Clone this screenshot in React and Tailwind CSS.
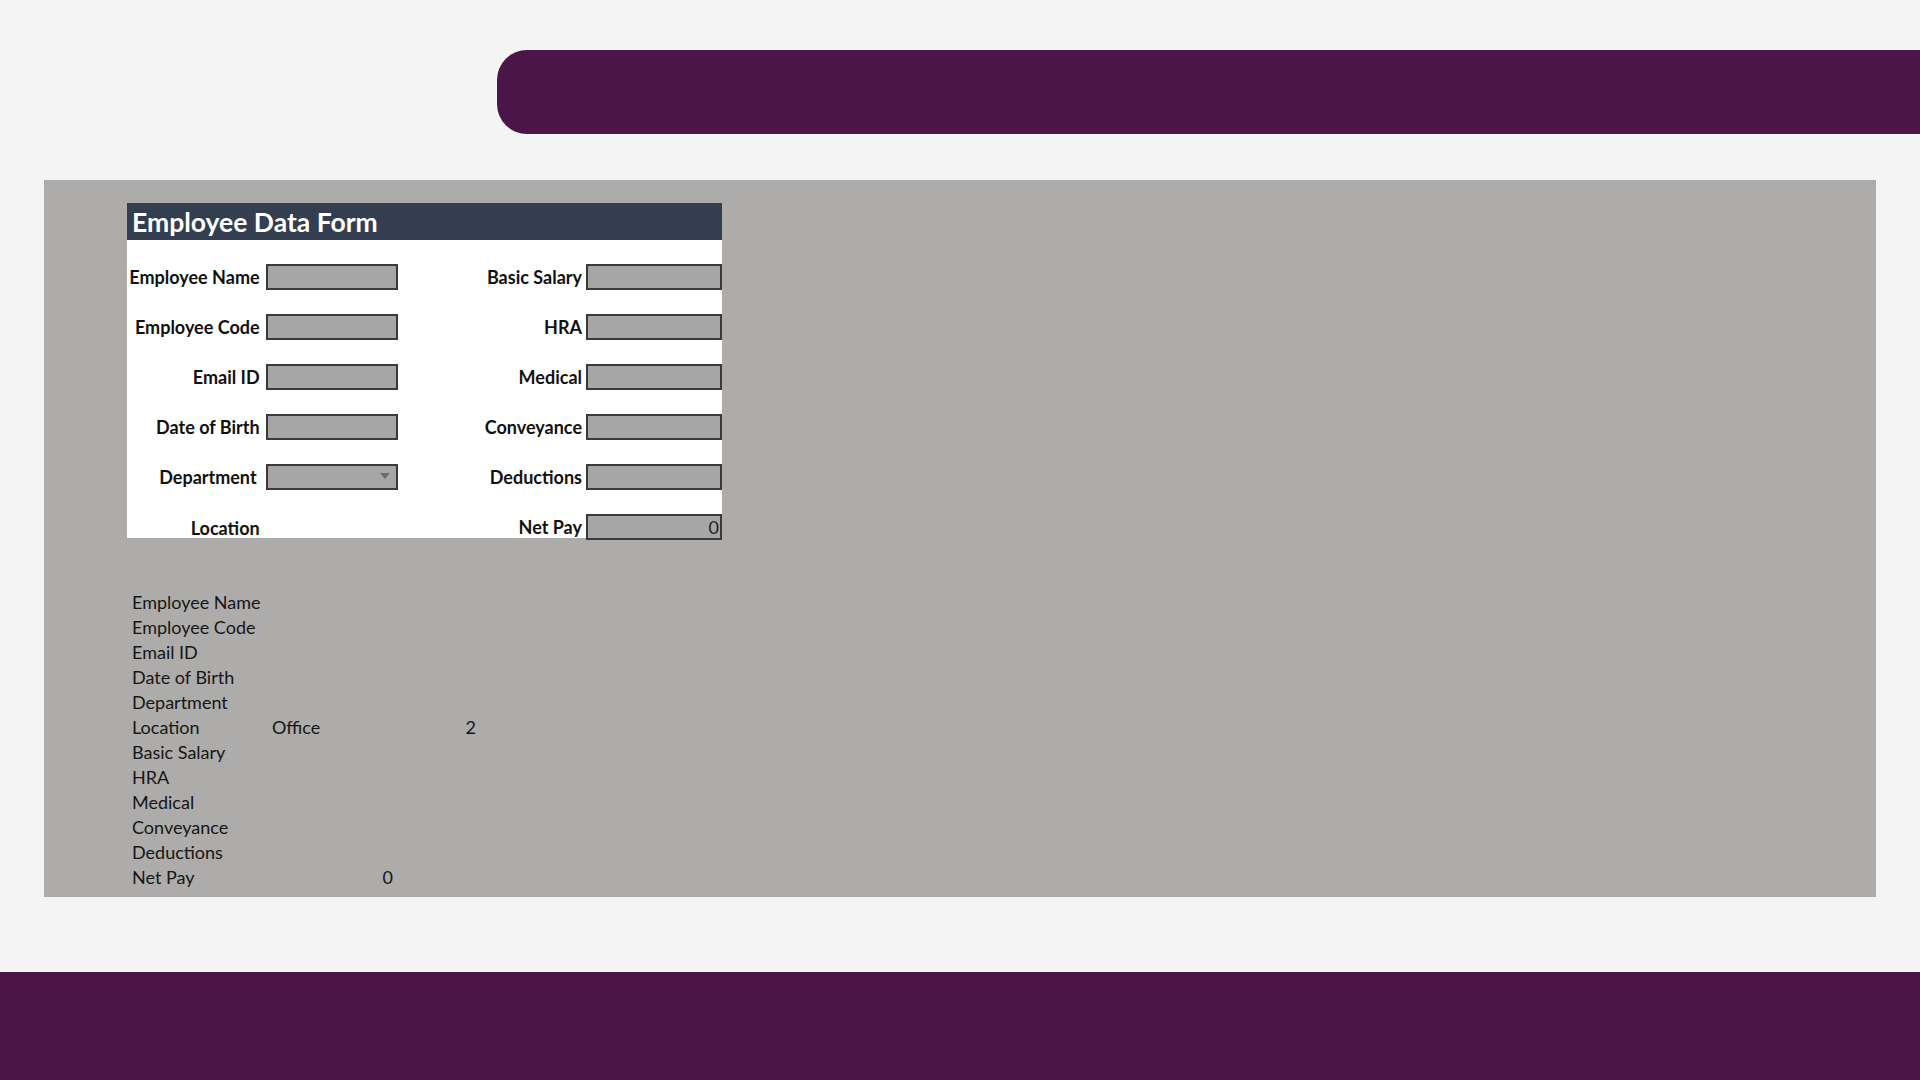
import React from "react";

const leftRows = ["Employee Name", "Employee Code", "Email ID", "Date of Birth", "Department", "Location"];
const rightRows = ["Basic Salary", "HRA", "Medical", "Conveyance", "Deductions", "Net Pay"];

function Box({ w, children, arrow }) {
  return (
    <div className={`relative h-[26px] ${w} border-2 border-[#3a3a3a] bg-[#a6a6a6] flex items-center justify-end pr-[1px] text-[18px] text-[#222]`}>
      {children}
      {arrow && (
        <svg className="absolute right-[6px] top-[7px]" width="10" height="6" viewBox="0 0 10 6">
          <path d="M0 0 L10 0 L5 6 Z" fill="#6b6b6b" />
        </svg>
      )}
    </div>
  );
}

const listRows = [
  ["Employee Name", "", "", ""],
  ["Employee Code", "", "", ""],
  ["Email ID", "", "", ""],
  ["Date of Birth", "", "", ""],
  ["Department", "", "", ""],
  ["Location", "Office", "", "2"],
  ["Basic Salary", "", "", ""],
  ["HRA", "", "", ""],
  ["Medical", "", "", ""],
  ["Conveyance", "", "", ""],
  ["Deductions", "", "", ""],
  ["Net Pay", "", "0", ""],
];

export default function App() {
  return (
    <div className="w-[1920px] h-[1080px] bg-[#f4f4f4] flex flex-col overflow-hidden" style={{ fontFamily: "Lato, 'Open Sans', sans-serif" }}>
      <div className="h-[180px] pt-[50px] pl-[497px]">
        <div className="h-[84px] bg-[#4b154a] rounded-l-[30px]"></div>
      </div>
      <div className="ml-[44px] w-[1832px] h-[717px] bg-[#adacaa] pt-[23px] pl-[83px]">
        <div className="w-[595px] h-[335px] bg-white">
          <div className="h-[37px] bg-[#333f50] flex items-center pl-[5px] pt-[2px] text-white font-bold text-[26.5px] leading-none">
            Employee Data Form
          </div>
          <div className="pt-[24px] flex flex-col gap-[24px]">
            {leftRows.map((l, i) => (
              <div key={l} className="flex items-center h-[26px]">
                <div className={`w-[133px] text-right font-bold text-[18px] text-[#111] whitespace-nowrap ${l === "Department" ? "pr-[3px]" : ""} ${l === "Location" ? "pt-[3px]" : "pt-[1px]"}`}>{l}</div>
                <div className="ml-[6px] w-[132px]">
                  {l !== "Location" && <Box w="w-[132px]" arrow={l === "Department"} />}
                </div>
                <div className="w-[185px] text-right font-bold text-[18px] text-[#111] whitespace-nowrap pt-[1px]">{rightRows[i]}</div>
                <div className="ml-[4px]">
                  <Box w="w-[136px]">{rightRows[i] === "Net Pay" ? "0" : ""}</Box>
                </div>
              </div>
            ))}
          </div>
        </div>
        <div className="mt-[52px] ml-[5px] grid grid-cols-[140px_124px_83px] text-[18px] leading-[25px] text-[#161616]">
          {listRows.map((r) => (
            <React.Fragment key={r[0]}>
              <div className="whitespace-nowrap">{r[0]}</div>
              <div className="relative">
                <span>{r[1]}</span>
                {r[2] && <span className="absolute right-[3px] top-0">{r[2]}</span>}
              </div>
              <div className="text-right pr-[3px]">{r[3]}</div>
            </React.Fragment>
          ))}
        </div>
      </div>
      <div className="flex-1"></div>
      <div className="h-[108px] bg-[#4b154a]"></div>
    </div>
  );
}
